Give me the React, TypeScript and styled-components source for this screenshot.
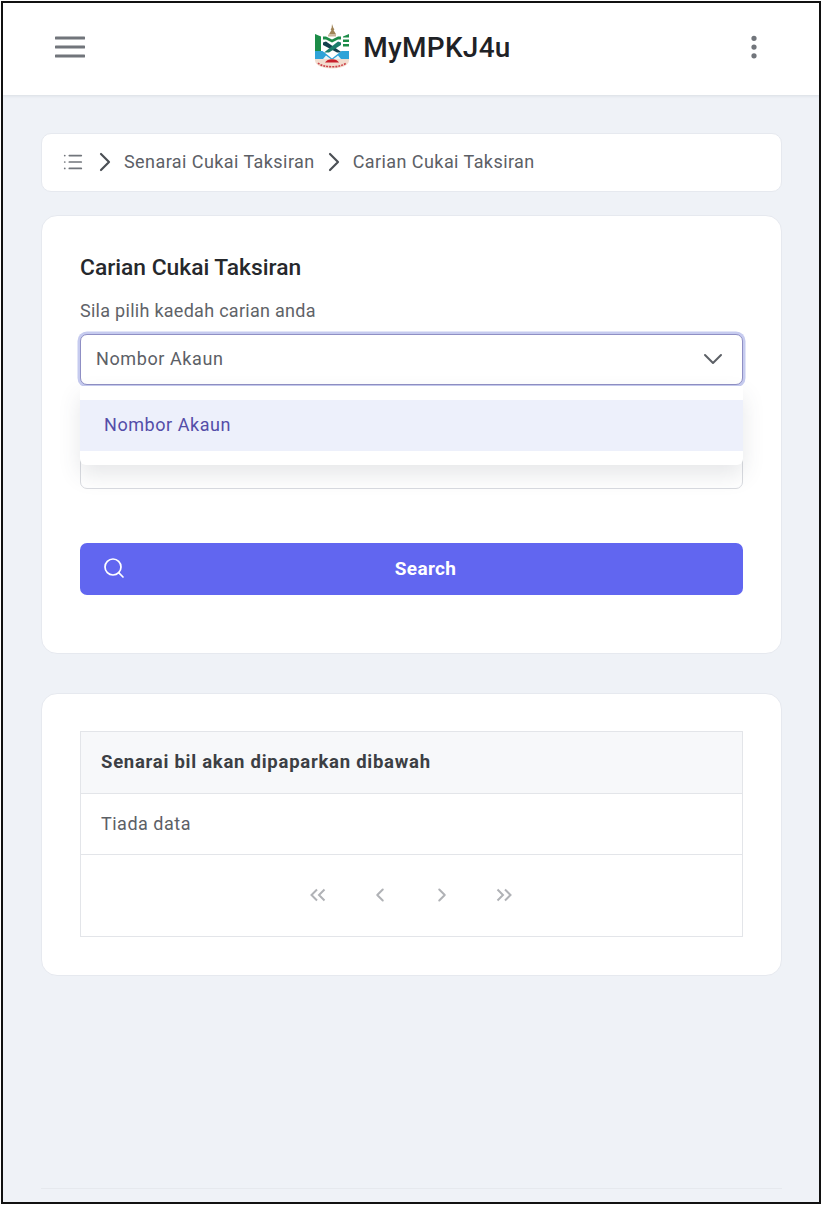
import React from "react";
import styled, { createGlobalStyle } from "styled-components";
import { EllipsisVertical, List, ChevronRight, ChevronDown, Search, ChevronLeft } from "lucide-react";

const Global = createGlobalStyle`
  html, body { margin: 0; padding: 0; background: #fff; }
  * { box-sizing: border-box; }
  body { font-family: Roboto, "Liberation Sans", sans-serif; }
`;

const Frame = styled.div`
  width: 820px;
  height: 1203px;
  margin: 1px 0 0 1px;
  border: 2px solid #111;
  background: #eff2f7;
  display: flex;
  flex-direction: column;
  overflow: hidden;
`;

const Header = styled.header`
  height: 92px;
  flex: none;
  background: #fff;
  box-shadow: 0 1px 3px rgba(60, 70, 90, 0.12);
  display: flex;
  align-items: center;
  justify-content: space-between;
  padding: 0 50px 4px 52px;
  position: relative;
`;

const IconBtn = styled.div`
  display: flex;
  align-items: center;
  color: #71757b;
`;

const Brand = styled.div`
  display: flex;
  align-items: center;
  gap: 13px;
  margin-left: 1px;
`;

const BrandName = styled.span`
  font-size: 28px;
  font-weight: 500;
  color: #1f2226;
  letter-spacing: 0.25px;
`;

const Main = styled.main`
  flex: 1;
  padding: 38px 37px 0 38px;
  display: flex;
  flex-direction: column;
`;

const Crumbs = styled.nav`
  height: 59px;
  background: #fff;
  border: 1px solid #e6e9ef;
  border-radius: 10px;
  display: flex;
  align-items: center;
  padding: 0 20px 2px;
  color: #5c6066;
  font-size: 18px;
  letter-spacing: 0.43px;
`;

const CrumbSep = styled.span<{ $l: number; $r: number }>`
  display: flex;
  color: #4b4f55;
  margin: 0 ${(p) => p.$r}px 0 ${(p) => p.$l}px;
`;

const Card = styled.section<{ $mt: number; $h: number }>`
  margin-top: ${(p) => p.$mt}px;
  height: ${(p) => p.$h}px;
  background: #fff;
  border: 1px solid #e6e9ef;
  border-radius: 16px;
  padding: 0 38px;
`;

const Title = styled.h2`
  margin: 36px 0 0;
  font-size: 22.8px;
  line-height: 32px;
  font-weight: 500;
  color: #26282c;
`;

const Label = styled.label`
  display: block;
  margin-top: 15px;
  font-size: 18px;
  line-height: 24px;
  color: #5f6368;
  letter-spacing: 0.28px;
`;

const SelectWrap = styled.div`
  position: relative;
  margin-top: 11px;
`;

const SelectBox = styled.div`
  height: 51px;
  border: 1.5px solid #8f8fc4;
  border-radius: 7px;
  box-shadow: 0 0 0 2.5px #c6cbef;
  background: #fff;
  display: flex;
  align-items: center;
  justify-content: space-between;
  padding: 0 13px 2px 15px;
  font-size: 18px;
  color: #5c6066;
  letter-spacing: 0.6px;
`;

const Arrow = styled.span`
  display: flex;
  color: #5c6066;
  margin: -4px 0;
`;

const Dropdown = styled.div`
  position: absolute;
  left: 0;
  right: 0;
  top: 52px;
  height: 79px;
  padding: 14px 0;
  background: #fff;
  border-radius: 0 0 6px 6px;
  box-shadow: 0 10px 22px rgba(60, 66, 87, 0.13);
  z-index: 2;
`;

const Option = styled.div`
  height: 51px;
  background: #edf0fb;
  color: #544da8;
  font-size: 18px;
  letter-spacing: 0.55px;
  display: flex;
  align-items: center;
  padding: 0 0 2px 24px;
`;

const HiddenInput = styled.div`
  margin-top: 52px;
  height: 52px;
  border: 1px solid #d9dbe0;
  border-radius: 7px;
  background: #fff;
`;

const SearchButton = styled.button`
  display: flex;
  width: 100%;
  height: 52px;
  margin-top: 54px;
  border: 0;
  border-radius: 7px;
  background: #6166f0;
  color: #fff;
  font-family: inherit;
  font-size: 19px;
  font-weight: 700;
  align-items: center;
  padding: 0 14px 2px 22px;
`;

const SearchLabel = styled.span`
  flex: 1;
  text-align: center;
  margin-left: -4px;
  letter-spacing: 0.35px;
`;

const Table = styled.div`
  margin-top: 37px;
  border: 1px solid #e3e5e9;
`;

const TableHead = styled.div`
  height: 62px;
  background: #f7f8fa;
  border-bottom: 1px solid #e3e5e9;
  display: flex;
  align-items: center;
  padding: 0 0 2px 20px;
  font-size: 18.5px;
  font-weight: 700;
  color: #3c3f44;
  letter-spacing: 0.74px;
`;

const TableRow = styled.div`
  height: 61px;
  border-bottom: 1px solid #e3e5e9;
  display: flex;
  align-items: center;
  padding: 0 0 2px 20px;
  font-size: 18px;
  color: #5c6066;
  letter-spacing: 0.5px;
`;

const Pager = styled.div`
  height: 81px;
  display: flex;
  align-items: center;
  justify-content: center;
  gap: 40px;
  padding: 0 2px 1px 0;
  color: #b0b2b6;
`;

const PagerItem = styled.span`
  width: 22px;
  display: flex;
  justify-content: center;
`;

const FooterRule = styled.div`
  margin-top: auto;
  margin-bottom: 13px;
  height: 1px;
  background: #e6e9ee;
`;

function Hamburger() {
  return (
    <svg width="30" height="22" viewBox="0 0 30 22" aria-hidden="true">
      <path d="M1 2h28M1 11h28M1 20h28" stroke="currentColor" strokeWidth="3" strokeLinecap="round" />
    </svg>
  );
}

function Double({ left }: { left?: boolean }) {
  return (
    <svg width="18" height="16" viewBox="0 0 18 16" fill="none" aria-hidden="true">
      <path
        d={left ? "M8 2.5L2.5 8 8 13.5M15.5 2.5L10 8l5.500 5.500" : "M2.5 2.5L8 8l-5.500 5.500M10 2.5L15.5 8 10 13.5"}
        stroke="currentColor"
        strokeWidth="2"
      />
    </svg>
  );
}

function Logo() {
  return (
    <svg width="36" height="46" viewBox="0 0 36 46" aria-hidden="true">
      <path d="M18 0l1.400 4 1 1.200-.8 1 2.600 4.300H14.800l2.600-4.300-.8-1 1-1.200z" fill="#a08356" />
      <rect x="14" y="10.500" width="8" height="2" fill="#c9b79b" />
      <path d="M1 10l6 2.500V27H1z" fill="#1c8c48" />
      <path d="M9 12.500h3l6 3 6-3h3v3h-3l-6 3-6-3H9z" fill="#1c8c48" />
      <path d="M29 12.500l6-2.500v3.500h-6zM29 15.500h6v2.500h-6zM29 20h6v2.500h-6z" fill="#1c8c48" />
      <path d="M9 18.500l3-1 16 11h-5L9 21z" fill="#15404e" />
      <path d="M27 18.500l-3-1-14 11h5l12-7.500z" fill="#1c7c6a" />
      <path d="M1 27h7.500l2 1.500 7.500 6 7.500-6 2-1.500H35v8H1z" fill="#2fa3d8" />
      <path d="M12 31.500l6 4.500 6-4.500 3 3.500H9z" fill="#e9f4f8" />
      <path d="M1 35h34v1.500c0 5-8 8-17 8S1 41.500 1 36.500z" fill="#f2ddcf" />
      <path d="M11 38.500c2-4.500 12-4.500 14 0z" fill="#c8202c" />
      <path d="M4 39c5 5 23 5 28 0" fill="none" stroke="#cc4049" strokeWidth="1.600" strokeDasharray="2 1" />
    </svg>
  );
}

export default function App() {
  return (
    <>
      <Global />
      <Frame>
        <Header>
          <IconBtn>
            <Hamburger />
          </IconBtn>
          <Brand>
            <Logo />
            <BrandName>MyMPKJ4u</BrandName>
          </Brand>
          <IconBtn>
            <EllipsisVertical size={30} strokeWidth={2.2} />
          </IconBtn>
        </Header>
        <Main>
          <Crumbs>
            <IconBtn>
              <List size={22} strokeWidth={1.9} />
            </IconBtn>
            <CrumbSep $l={5} $r={3}>
              <ChevronRight size={32} strokeWidth={1.6} />
            </CrumbSep>
            <span>Senarai Cukai Taksiran</span>
            <CrumbSep $l={3} $r={3}>
              <ChevronRight size={32} strokeWidth={1.6} />
            </CrumbSep>
            <span>Carian Cukai Taksiran</span>
          </Crumbs>
          <Card $mt={23} $h={439}>
            <Title>Carian Cukai Taksiran</Title>
            <Label>Sila pilih kaedah carian anda</Label>
            <SelectWrap>
              <SelectBox>
                <span>Nombor Akaun</span>
                <Arrow>
                  <ChevronDown size={32} strokeWidth={1.5} />
                </Arrow>
              </SelectBox>
              <Dropdown>
                <Option>Nombor Akaun</Option>
              </Dropdown>
            </SelectWrap>
            <HiddenInput />
            <SearchButton>
              <Search size={24} strokeWidth={1.7} />
              <SearchLabel>Search</SearchLabel>
            </SearchButton>
          </Card>
          <Card $mt={39} $h={283}>
            <Table>
              <TableHead>Senarai bil akan dipaparkan dibawah</TableHead>
              <TableRow>Tiada data</TableRow>
              <Pager>
                <PagerItem><Double left /></PagerItem>
                <PagerItem><ChevronLeft size={22} strokeWidth={2.2} /></PagerItem>
                <PagerItem><ChevronRight size={22} strokeWidth={2.2} /></PagerItem>
                <PagerItem><Double /></PagerItem>
              </Pager>
            </Table>
          </Card>
          <FooterRule />
        </Main>
      </Frame>
    </>
  );
}
